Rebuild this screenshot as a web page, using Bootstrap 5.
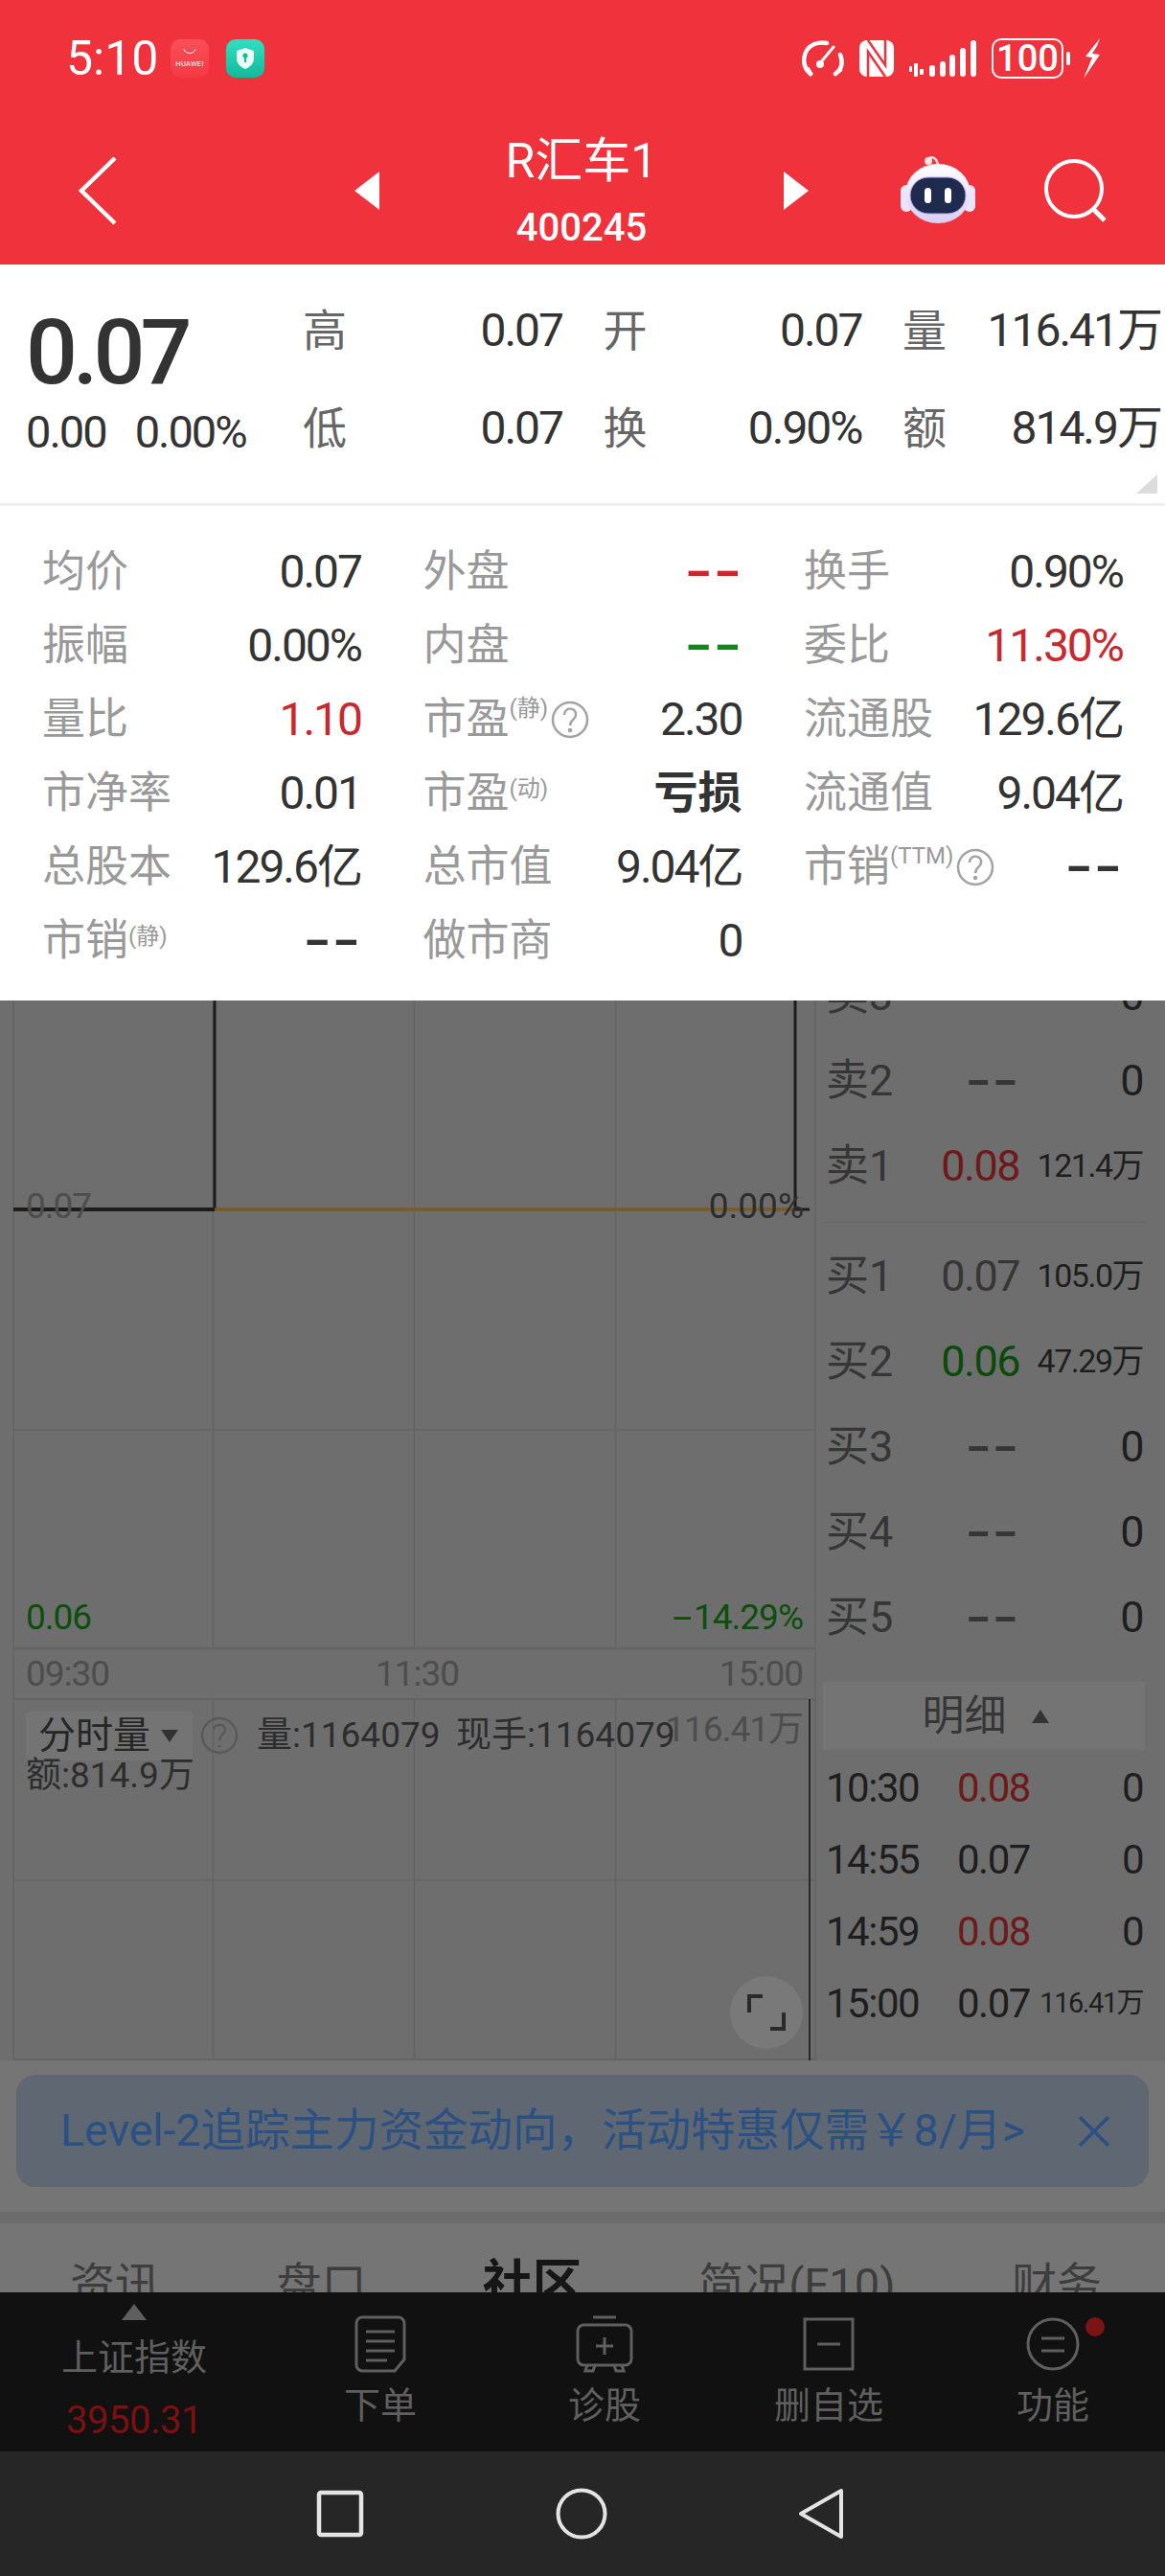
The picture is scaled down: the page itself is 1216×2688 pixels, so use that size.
<!DOCTYPE html>
<html lang="zh-CN">
<head>
<meta charset="UTF-8">
<meta name="viewport" content="width=device-width, initial-scale=1.0">
<title>R汇车1 400245</title>
<link href="https://cdn.jsdelivr.net/npm/bootstrap@5.3.0/dist/css/bootstrap.min.css" rel="stylesheet">
<style>
body { margin: 0; width: 1216px; height: 2688px; overflow: hidden; background: #6e6e6e; font-family: Roboto, "Noto Sans CJK SC", sans-serif; }
svg { display: block; flex-shrink: 0; }
.num { letter-spacing: -2px; }

.hd-wrap { background: #ef323b; color: #fff; height: 276px; }
.st-bar { height: 122px; padding-left: 69px; }
.st-time { font-size: 50px; letter-spacing: 0; line-height: 1; width: 109px; }
.app-ic { width: 40px; height: 40px; border-radius: 10px; margin-right: 18px; }
.app-hw { background: linear-gradient(#f8505a, #f43a44); color: #fff; font-size: 7.5px; letter-spacing: .3px; line-height: 1; }
.app-sec { background: linear-gradient(#2fe0bf, #14b99c); box-shadow: 0 0 2px #777; }
.st-right { margin-left: 543px; }
.batt { width: 75px; height: 42px; border: 2.5px solid #fff; border-radius: 10px; font-size: 38px; line-height: 1; letter-spacing: 0; font-weight: 500; }
.batt-nub { width: 4px; height: 14px; background: #fff; border-radius: 2px; margin: 0 13px 0 3px; }
.nv-bar { height: 154px; }
.nv-left { width: 370px; padding-left: 78px; }
.nv-mid { width: 474px; }
.nv-title { font-size: 50px; line-height: 56px; margin-top: 3px; letter-spacing: 0; }
.nv-code { font-size: 40px; line-height: 46px; font-weight: 500; margin-top: 19px; letter-spacing: 0; }
.nv-robot { margin-left: 96px; }
.nv-search { margin-left: 72px; }

.qt-wrap { background: #fff; height: 252px; border-bottom: 3px solid #eee; padding-top: 18px; color: #333; position: relative; }
.qt-left { width: 316px; padding-left: 27px; }
.qt-big { font-size: 95px; font-weight: 500; line-height: 100px; margin-top: 24px; letter-spacing: -5px; height: 100px; }
.qt-small { font-size: 47px; line-height: 56px; margin-top: 5px; gap: 30px; white-space: nowrap; }
.qt-grid { display: grid; grid-template-columns: 271px 270px 270px; column-gap: 42.5px; grid-auto-rows: 102px; }
.qt-cell { font-size: 46px; }
.qt-cell .num, .pn-cell .num { font-size: 48px; }
.qt-lbl { color: #666; }
.qt-corner { position: absolute; right: 8px; top: 219px; }

.pn-wrap { background: #fff; height: 516px; padding: 30px 44px 0; }
.pn-grid { display: grid; grid-template-columns: repeat(3, 333px); column-gap: 64.5px; grid-auto-rows: 77px; }
.pn-cell { font-size: 46px; color: #333; white-space: nowrap; }
.pn-lbl { color: #999; font-size: 45px; }
.pn-lbl sup { font-size: 24px; top: -12px; vertical-align: baseline; position: relative; }
.ic-q { margin-left: 3px; }
.c-up { color: #c8282e; }
.c-dn { color: #0f8a12; }
.pn-bold { font-weight: 700; font-size: 46px; letter-spacing: 0; }
.pn-cell .pn-dash { display: inline-block; font-weight: 700; letter-spacing: 0; transform: scaleX(1.6); transform-origin: 100% 50%; }

.mk-wrap { height: 1106px; overflow: hidden; }
.ch-area { width: 852px; height: 1106px; position: relative; }
.ch-lines { position: absolute; left: 0; top: 0; }
.ch-tx { position: absolute; font-size: 37px; line-height: 44px; color: #4d4d4d; letter-spacing: -1px; white-space: nowrap; }
.ch-dk { color: #2d2d2d; letter-spacing: 0; }
.ch-gr { color: #0b4f0b; }
.ch-wd { display: inline-block; transform: scaleX(2); transform-origin: 0 50%; margin-right: 13px; }
.pos-prev { left: 27px; top: 193px; }
.pos-pct { right: 13px; top: 193px; }
.pos-low { left: 27px; top: 622px; }
.pos-lowp { right: 14px; top: 622px; }
.pos-t1 { left: 27px; top: 681px; }
.pos-t2 { left: 392px; top: 681px; }
.pos-t3 { right: 14px; top: 681px; }
.pos-vol { left: 268px; top: 745px; }
.pos-cur { left: 476px; top: 745px; }
.pos-max { right: 14px; top: 739px; }
.pos-amt { left: 27px; top: 787px; }
.ch-chip { position: absolute; left: 27px; top: 742px; width: 174px; height: 51px; background: #747474; border-radius: 4px; padding-left: 13px; font-size: 39px; color: #262626; line-height: 51px; letter-spacing: 0; }
.ch-caret { border-left: 9px solid transparent; border-right: 9px solid transparent; border-top: 13px solid #333; margin-left: 11px; }
.ch-expand { position: absolute; left: 762px; top: 1018px; width: 76px; height: 76px; border-radius: 50%; background: #797979; }

.bk-col { width: 364px; padding-left: 10px; color: #1e1e1e; }
.bk-rows { margin-top: -50px; }
.bk-row { display: grid; grid-template-columns: 120px 82px 129px; height: 89px; align-items: center; font-size: 45px; letter-spacing: -1.5px; }
.bk-lbl { color: #363636; letter-spacing: 0; }
.bk-pr { color: #363636; text-align: right; }
.bk-qt { text-align: right; }
.bk-sm { font-size: 34px; letter-spacing: -1.5px; }
.bk-rd { color: #6f1a1a; }
.bk-gn { color: #0a4a0a; }
.bk-dash { font-weight: 700; letter-spacing: 0; transform: scaleX(1.6); transform-origin: 100% 50%; }
.bk-div { height: 1px; background: #656565; width: 336px; margin: 14px 0 11px -3px; }
.bk-hd { width: 336px; height: 71px; margin: 23px 0 2px -3px; background: #747474; font-size: 44px; color: #363636; gap: 26px; padding-left: 3px; }
.bk-hd-tri { border-left: 9px solid transparent; border-right: 9px solid transparent; border-bottom: 14px solid #333; }
.dt-row { display: grid; grid-template-columns: 137px 76px 118px; height: 75px; align-items: center; font-size: 42px; letter-spacing: -1.5px; }
.dt-qt { text-align: right; }
.dt-sm { font-size: 29px; letter-spacing: -1.5px; }

.bn-zone { height: 158px; background: #757575; padding: 15px 17px 0; }
.bn-box { height: 117px; border-radius: 20px; background: #5f6772; color: #2b5082; font-size: 46.5px; padding: 0 40px 0 46px; white-space: nowrap; letter-spacing: 0; }
.bn-band { height: 12px; background: #6c6c6c; }
.tb-zone { height: 72px; background: #757575; overflow: hidden; padding: 37px 66px 0 73px; font-size: 47px; line-height: 54px; color: #3d3d3d; }
.tb-on { font-weight: 700; color: #161616; font-size: 52px; line-height: 54px; }

.bt-bar { height: 166px; background: #111; color: #5f5f5f; font-size: 38px; line-height: 1; }
.bt-idx { width: 280px; padding-top: 12px; }
.bt-tri { border-left: 13px solid transparent; border-right: 13px solid transparent; border-bottom: 17px solid #5f5f5f; margin-bottom: 20px; }
.bt-val { color: #7a1010; margin-top: 27px; font-size: 40px; letter-spacing: -.5px; }
.bt-item { width: 234px; padding-top: 24px; position: relative; }
.bt-txt { margin-top: 15px; }
.bt-dot { position: absolute; left: 151px; top: 26px; width: 20px; height: 20px; border-radius: 50%; background: #7d1414; }
.sy-bar { height: 130px; background: #262626; padding-left: 329px; }
.sy-gap { margin-left: 199px; }
</style>
</head>
<body>

<div class="hd-wrap">
  <div class="st-bar d-flex align-items-center">
    <div class="st-time">5:10</div>
    <div class="app-ic app-hw d-flex flex-column align-items-center justify-content-center">
      <svg width="14" height="8" viewBox="0 0 14 8"><path d="M1 0c1 6 11 6 12 0" fill="none" stroke="#fff" stroke-width="1"/></svg>
      <span class="mt-1">HUAWEI</span>
    </div>
    <div class="app-ic app-sec d-flex align-items-center justify-content-center">
      <svg width="18" height="22" viewBox="0 0 18 22"><path d="M9 0l9 3v8c0 5-4 9-9 11-5-2-9-6-9-11V3z" fill="#eafff9"/><circle cx="9" cy="8" r="2.6" fill="#18b99d"/><rect x="8" y="9" width="2" height="6" fill="#18b99d"/></svg>
    </div>
    <div class="st-right d-flex align-items-center">
      <!-- gauge -->
      <svg width="44" height="38" viewBox="0 0 44 38" fill="none" stroke="#fff" stroke-width="4.500" stroke-linecap="round" class="me-3">
        <path d="M9 35C-2 26 1 9 13 4c5-2 9-2 13-1"/><path d="M9 35l-3-5M35 35l5-4M40 15c3 8 2 15-5 20"/><path d="M18 25L33 7" stroke-width="3"/><circle cx="19" cy="25" r="4" fill="#fff" stroke="none"/>
      </svg>
      <!-- nfc -->
      <svg width="36" height="38" viewBox="0 0 36 38" class="me-3">
        <rect width="36" height="38" rx="8" fill="#fff"/>
        <path d="M9 38V12L27 38M9 0L27 26V0" fill="none" stroke="#ef323b" stroke-width="2.500"/>
      </svg>
      <!-- signal -->
      <svg width="70" height="38" viewBox="0 0 70 38" fill="#fff" class="me-3">
        <rect x="0" y="27" width="3" height="6" rx="1"/><rect x="5" y="24" width="4" height="14" rx="1"/><rect x="11" y="30" width="4" height="6" rx="1"/>
        <rect x="21" y="26" width="6" height="12" rx="3"/><rect x="32" y="22" width="6" height="16" rx="3"/><rect x="42" y="15" width="6" height="23" rx="3"/><rect x="53" y="8" width="6" height="30" rx="3"/><rect x="64" y="0" width="6" height="38" rx="3"/>
      </svg>
      <div class="batt d-flex align-items-center justify-content-center">100</div>
      <div class="batt-nub"></div>
      <!-- bolt -->
      <svg width="19" height="42" viewBox="0 0 19 42" fill="#fff"><path d="M18 0L3 19l7 1-9 22 17-25-8-1 5-8z"/></svg>
    </div>
  </div>
  <div class="nv-bar d-flex align-items-center">
    <div class="nv-left">
      <svg width="46" height="72" viewBox="0 0 46 72" fill="none" stroke="#fff" stroke-width="4.500"><path d="M42 2L7 36l35 34"/></svg>
    </div>
    <div class="nv-mid d-flex align-items-center justify-content-between">
      <svg width="26" height="40" viewBox="0 0 26 40" fill="#fff"><path d="M26 0v40L0 20z"/></svg>
      <div class="text-center">
        <div class="nv-title">R汇车1</div>
        <div class="nv-code">400245</div>
      </div>
      <svg width="26" height="40" viewBox="0 0 26 40" fill="#fff"><path d="M0 0v40l26-20z"/></svg>
    </div>
    <svg class="nv-robot" width="78" height="72" viewBox="0 0 78 72">
      <defs><linearGradient id="rb" x1="0" y1="0" x2="0" y2="1"><stop offset="0" stop-color="#fff"/><stop offset="1" stop-color="#d9cdf4"/></linearGradient></defs>
      <path d="M30 2c3-2 7 0 8 4l2 4" fill="none" stroke="#f6e4e4" stroke-width="2.500"/>
      <circle cx="29" cy="5" r="4" fill="#f6e4e4"/>
      <rect x="0" y="30" width="12" height="28" rx="6" fill="#ebe4fa"/><rect x="66" y="30" width="12" height="28" rx="6" fill="#ebe4fa"/>
      <ellipse cx="39" cy="39" rx="34" ry="31" fill="url(#rb)"/>
      <rect x="10" y="22" width="58" height="38" rx="19" fill="#1e2a4e" stroke="#b8a6ea" stroke-width="1"/>
      <rect x="25" y="33" width="7" height="16" rx="3.500" fill="#fff"/><rect x="46" y="33" width="7" height="16" rx="3.500" fill="#fff"/>
    </svg>
    <svg class="nv-search" width="66" height="66" viewBox="0 0 66 66" fill="none" stroke="#fff" stroke-width="4"><circle cx="31" cy="31" r="29"/><path d="M51 52l12 12" stroke-width="5"/></svg>
  </div>
</div>

<div class="qt-wrap d-flex">
  <div class="qt-left">
    <div class="qt-big">0.07</div>
    <div class="qt-small d-flex num"><span>0.00</span><span>0.00%</span></div>
  </div>
  <div class="qt-grid">
    <div class="qt-cell d-flex justify-content-between align-items-center"><span class="qt-lbl">高</span><span class="num">0.07</span></div>
    <div class="qt-cell d-flex justify-content-between align-items-center"><span class="qt-lbl">开</span><span class="num">0.07</span></div>
    <div class="qt-cell d-flex justify-content-between align-items-center"><span class="qt-lbl">量</span><span class="num">116.41万</span></div>
    <div class="qt-cell d-flex justify-content-between align-items-center"><span class="qt-lbl">低</span><span class="num">0.07</span></div>
    <div class="qt-cell d-flex justify-content-between align-items-center"><span class="qt-lbl">换</span><span class="num">0.90%</span></div>
    <div class="qt-cell d-flex justify-content-between align-items-center"><span class="qt-lbl">额</span><span class="num">814.9万</span></div>
  </div>
  <svg class="qt-corner" width="22" height="20" viewBox="0 0 22 20"><path d="M22 0v20H0z" fill="#dcdcdc"/></svg>
</div>

<div class="pn-wrap">
  <div class="pn-grid">
    <div class="pn-cell d-flex justify-content-between align-items-center"><span class="pn-lbl">均价</span><span class="num">0.07</span></div>
    <div class="pn-cell d-flex justify-content-between align-items-center"><span class="pn-lbl">外盘</span><span class="num pn-dash c-up">--</span></div>
    <div class="pn-cell d-flex justify-content-between align-items-center"><span class="pn-lbl">换手</span><span class="num">0.90%</span></div>

    <div class="pn-cell d-flex justify-content-between align-items-center"><span class="pn-lbl">振幅</span><span class="num">0.00%</span></div>
    <div class="pn-cell d-flex justify-content-between align-items-center"><span class="pn-lbl">内盘</span><span class="num pn-dash c-dn">--</span></div>
    <div class="pn-cell d-flex justify-content-between align-items-center"><span class="pn-lbl">委比</span><span class="num c-up">11.30%</span></div>

    <div class="pn-cell d-flex justify-content-between align-items-center"><span class="pn-lbl">量比</span><span class="num c-up">1.10</span></div>
    <div class="pn-cell d-flex justify-content-between align-items-center">
      <span class="pn-lbl d-flex align-items-center">市盈<sup>(静)</sup><svg class="ic-q" width="40" height="40" viewBox="0 0 40 40" fill="none" stroke="#a3a3a3" stroke-width="2.500"><circle cx="20" cy="20" r="18"/><path d="M14 15c0-9 13-8 12 0 0 5-6 5-6 11"/><circle cx="20" cy="31" r="1" fill="#a3a3a3"/></svg></span>
      <span class="num">2.30</span></div>
    <div class="pn-cell d-flex justify-content-between align-items-center"><span class="pn-lbl">流通股</span><span class="num">129.6亿</span></div>

    <div class="pn-cell d-flex justify-content-between align-items-center"><span class="pn-lbl">市净率</span><span class="num">0.01</span></div>
    <div class="pn-cell d-flex justify-content-between align-items-center"><span class="pn-lbl">市盈<sup>(动)</sup></span><span class="pn-bold">亏损</span></div>
    <div class="pn-cell d-flex justify-content-between align-items-center"><span class="pn-lbl">流通值</span><span class="num">9.04亿</span></div>

    <div class="pn-cell d-flex justify-content-between align-items-center"><span class="pn-lbl">总股本</span><span class="num">129.6亿</span></div>
    <div class="pn-cell d-flex justify-content-between align-items-center"><span class="pn-lbl">总市值</span><span class="num">9.04亿</span></div>
    <div class="pn-cell d-flex justify-content-between align-items-center">
      <span class="pn-lbl d-flex align-items-center">市销<sup>(TTM)</sup><svg class="ic-q" width="40" height="40" viewBox="0 0 40 40" fill="none" stroke="#a3a3a3" stroke-width="2.500"><circle cx="20" cy="20" r="18"/><path d="M14 15c0-9 13-8 12 0 0 5-6 5-6 11"/><circle cx="20" cy="31" r="1" fill="#a3a3a3"/></svg></span>
      <span class="num pn-dash">--</span></div>

    <div class="pn-cell d-flex justify-content-between align-items-center"><span class="pn-lbl">市销<sup>(静)</sup></span><span class="num pn-dash">--</span></div>
    <div class="pn-cell d-flex justify-content-between align-items-center"><span class="pn-lbl">做市商</span><span class="num">0</span></div>
  </div>
</div>

<div class="mk-wrap d-flex">
  <div class="ch-area">
    <svg class="ch-lines" width="852" height="1106" viewBox="0 0 852 1106" fill="none">
      <g stroke="#646464" stroke-width="1.500">
        <path d="M14 0V1106M222.500 0V676M432.500 0V676M642.500 0V676M851 0V1106"/>
        <path d="M222.500 729V1106M432.500 729V1106M642.500 729V1106"/>
        <path d="M14 448H851M14 918H851"/>
      </g>
      <path d="M14 676H851M14 729H851M14 1105H851" stroke="#646464" stroke-width="2"/>
      <path d="M14 218H224V0" stroke="#1c1c1c" stroke-width="3"/>
      <path d="M14 218H224" stroke="#1c1c1c" stroke-width="4"/>
      <path d="M224 218H830" stroke="#7d5a1e" stroke-width="3.500"/>
      <path d="M830 0V218H845" stroke="#1c1c1c" stroke-width="3"/>
      <path d="M845 729V1106" stroke="#2a2a2a" stroke-width="2"/>
    </svg>
    <span class="ch-tx pos-prev">0.07</span>
    <span class="ch-tx ch-dk pos-pct">0.00%</span>
    <span class="ch-tx ch-gr pos-low">0.06</span>
    <span class="ch-tx ch-gr pos-lowp"><span class="ch-wd">-</span>14.29%</span>
    <span class="ch-tx pos-t1">09:30</span>
    <span class="ch-tx pos-t2">11:30</span>
    <span class="ch-tx pos-t3">15:00</span>
    <div class="ch-chip d-flex align-items-center">分时量<span class="ch-caret"></span></div>
    <svg class="position-absolute top-0 start-0" width="852" height="1106" viewBox="0 0 852 1106" fill="none" stroke="#5a5a5a" stroke-width="2.500">
      <circle cx="229" cy="767" r="18"/><path d="M223 761c0-7 12-7 12 0 0 5-6 5-6 11M229 777v2"/>
    </svg>
    <span class="ch-tx ch-dk pos-vol">量:1164079</span>
    <span class="ch-tx ch-dk pos-cur">现手:1164079</span>
    <span class="ch-tx pos-max">116.41万</span>
    <span class="ch-tx ch-dk pos-amt">额:814.9万</span>
    <div class="ch-expand d-flex align-items-center justify-content-center">
      <svg width="40" height="38" viewBox="0 0 40 38" fill="none" stroke="#2a2a2a" stroke-width="4"><path d="M2 19V2H16M38 19V36H24"/></svg>
    </div>
  </div>

  <div class="bk-col">
    <div class="bk-rows">
      <div class="bk-row"><span class="bk-lbl">卖3</span><span class="bk-pr bk-dash">--</span><span class="bk-qt">0</span></div>
      <div class="bk-row"><span class="bk-lbl">卖2</span><span class="bk-pr bk-dash">--</span><span class="bk-qt">0</span></div>
      <div class="bk-row"><span class="bk-lbl">卖1</span><span class="bk-pr bk-rd">0.08</span><span class="bk-qt bk-sm">121.4万</span></div>
      <div class="bk-div"></div>
      <div class="bk-row"><span class="bk-lbl">买1</span><span class="bk-pr">0.07</span><span class="bk-qt bk-sm">105.0万</span></div>
      <div class="bk-row"><span class="bk-lbl">买2</span><span class="bk-pr bk-gn">0.06</span><span class="bk-qt bk-sm">47.29万</span></div>
      <div class="bk-row"><span class="bk-lbl">买3</span><span class="bk-pr bk-dash">--</span><span class="bk-qt">0</span></div>
      <div class="bk-row"><span class="bk-lbl">买4</span><span class="bk-pr bk-dash">--</span><span class="bk-qt">0</span></div>
      <div class="bk-row"><span class="bk-lbl">买5</span><span class="bk-pr bk-dash">--</span><span class="bk-qt">0</span></div>
    </div>
    <div class="bk-hd d-flex align-items-center justify-content-center">明细<span class="bk-hd-tri"></span></div>
    <div class="dt-row"><span>10:30</span><span class="bk-rd">0.08</span><span class="dt-qt">0</span></div>
    <div class="dt-row"><span>14:55</span><span>0.07</span><span class="dt-qt">0</span></div>
    <div class="dt-row"><span>14:59</span><span class="bk-rd">0.08</span><span class="dt-qt">0</span></div>
    <div class="dt-row"><span>15:00</span><span>0.07</span><span class="dt-qt dt-sm">116.41万</span></div>
  </div>
</div>

<div class="bn-zone">
  <div class="bn-box d-flex align-items-center justify-content-between">
    <span>Level-2追踪主力资金动向，活动特惠仅需￥8/月&gt;</span>
    <svg width="34" height="34" viewBox="0 0 34 34" fill="none" stroke="#2b5082" stroke-width="3.500"><path d="M2 2l30 30M32 2L2 32"/></svg>
  </div>
</div>
<div class="bn-band"></div>
<div class="tb-zone d-flex justify-content-between">
  <span>资讯</span><span>盘口</span><span class="tb-on">社区</span><span>简况(F10)</span><span>财务</span>
</div>

<div class="bt-bar d-flex">
  <div class="bt-idx d-flex flex-column align-items-center">
    <div class="bt-tri"></div>
    <div>上证指数</div>
    <div class="bt-val">3950.31</div>
  </div>
  <div class="bt-item d-flex flex-column align-items-center">
    <svg width="54" height="60" viewBox="0 0 54 60" fill="none" stroke="#5f5f5f" stroke-width="3"><path d="M8 2H46c3 0 6 3 6 6V46L42 58H8c-3 0-6-3-6-6V8c0-3 3-6 6-6z"/><path d="M12 17H42M12 27H42M12 37H42M12 47H34"/></svg>
    <div class="bt-txt">下单</div>
  </div>
  <div class="bt-item d-flex flex-column align-items-center">
    <svg width="60" height="60" viewBox="0 0 60 60" fill="none" stroke="#5f5f5f" stroke-width="3"><path d="M18 2H42M8 10H52c3 0 6 3 6 6V46c0 3-3 6-6 6H8c-3 0-6-3-6-6V16c0-3 3-6 6-6z"/><path d="M30 23V41M21 32H39M12 52l-2 6h8l2-6M48 52l2 6h-8l-2-6"/></svg>
    <div class="bt-txt">诊股</div>
  </div>
  <div class="bt-item d-flex flex-column align-items-center">
    <svg width="54" height="60" viewBox="0 0 54 60" fill="none" stroke="#5f5f5f" stroke-width="3"><path d="M2 4H52V56H2zM15 30H39"/></svg>
    <div class="bt-txt">删自选</div>
  </div>
  <div class="bt-item d-flex flex-column align-items-center">
    <svg width="56" height="60" viewBox="0 0 56 60" fill="none" stroke="#5f5f5f" stroke-width="3"><circle cx="28" cy="30" r="26"/><path d="M16 24H40M16 37H40"/></svg>
    <div class="bt-txt">功能</div>
    <div class="bt-dot"></div>
  </div>
</div>

<div class="sy-bar d-flex align-items-center">
  <svg width="52" height="52" viewBox="0 0 52 52" fill="none" stroke="#e4e4e4" stroke-width="4.500"><rect x="4" y="4" width="44" height="44" rx="2"/></svg>
  <svg class="sy-gap" width="54" height="54" viewBox="0 0 54 54" fill="none" stroke="#e4e4e4" stroke-width="4"><circle cx="27" cy="27" r="24.500"/></svg>
  <svg class="sy-gap" width="48" height="54" viewBox="0 0 48 54" fill="none" stroke="#e4e4e4" stroke-width="4" stroke-linejoin="round"><path d="M45 3V51L3 27z"/></svg>
</div>

</body>
</html>
